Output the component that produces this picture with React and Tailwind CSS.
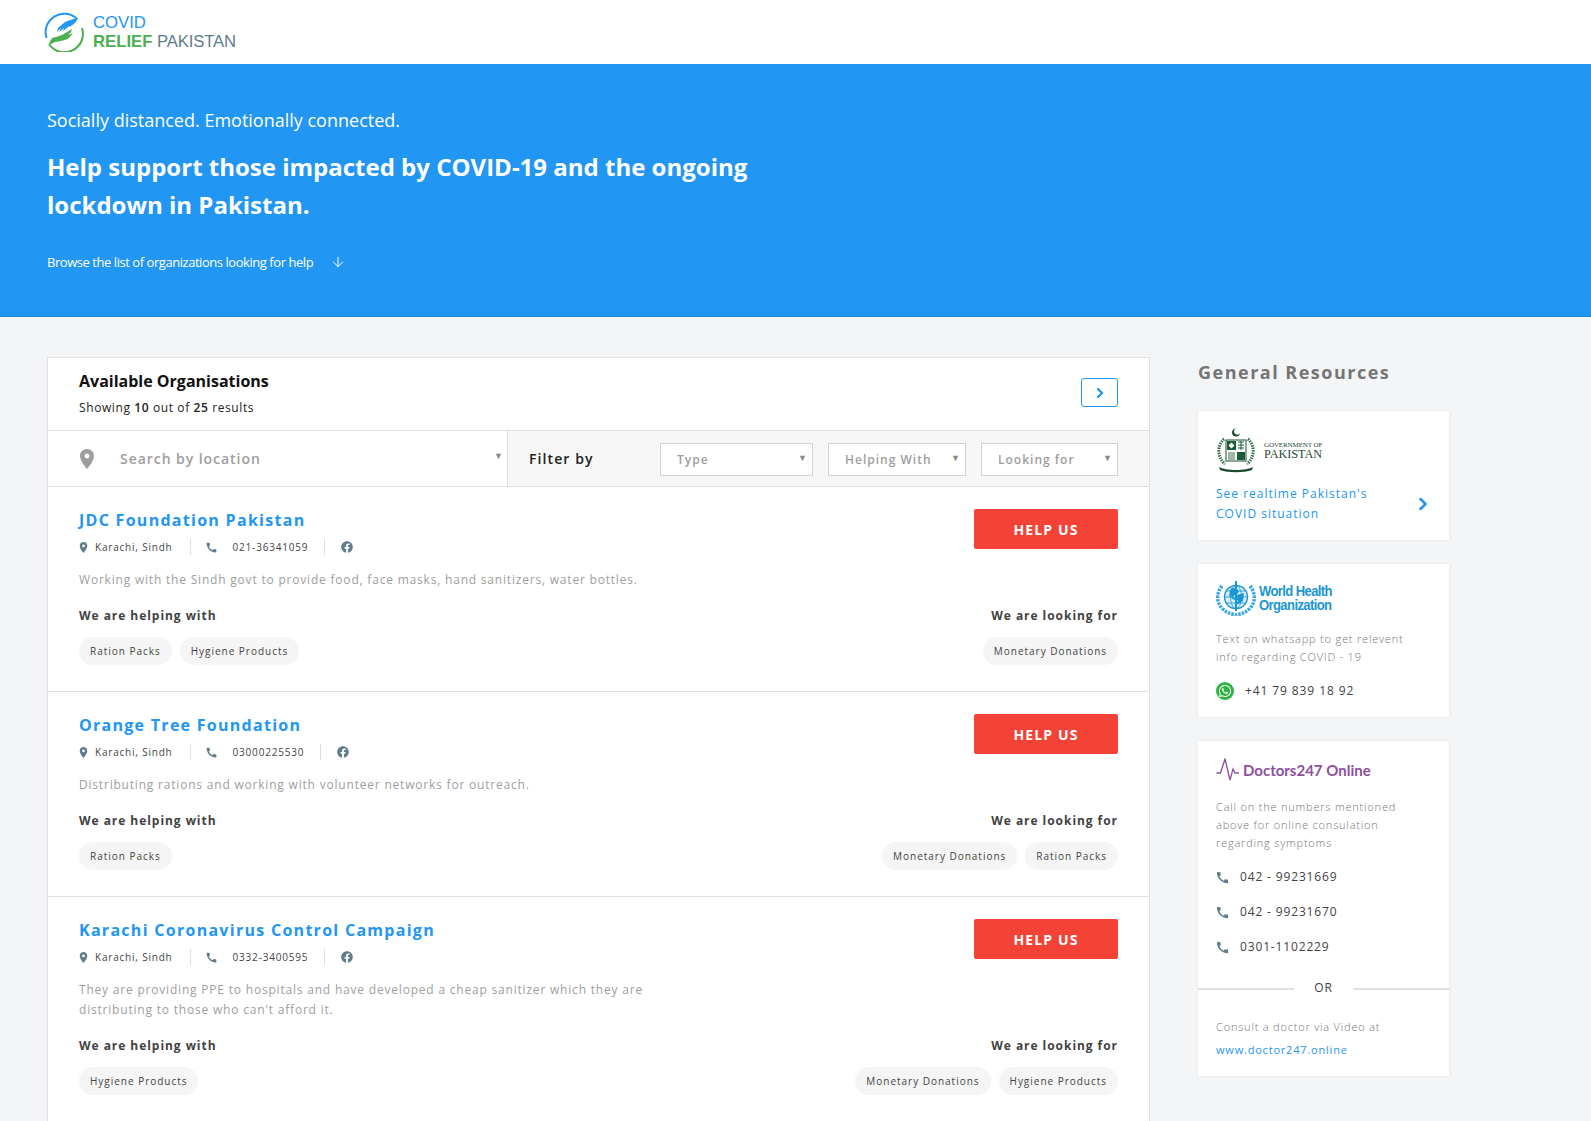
import React from "react";
import { ChevronRight, ArrowDown } from "lucide-react";
import { MdPlace, MdCall } from "react-icons/md";
import { FaFacebook, FaWhatsapp } from "react-icons/fa";

function CovidLogo() {
  return (
    <svg width="40" height="40" viewBox="0 0 40 40" className="shrink-0">
      <path d="M33 7 A18.500 18.500 0 0 0 2.500 26" fill="none" stroke="#2196f3" strokeWidth="2" />
      <path d="M38 16 A18.500 18.500 0 0 1 5 32" fill="none" stroke="#4caf50" strokeWidth="2" />
      <path d="M34 6 C29 7 25 8 21 10 L14 16 L13 20 L17 16 L15 20 L20 16 L19 19 L24 15 C28 14 32 11 34 6Z" fill="#2196f3" />
      <path d="M5 33 C6 28 8 25 12 25 L18 23 L23 20 L28 17 L27 20 L24 23 L29 21 L25 26 C21 29 15 29 11 30 C9 31 7 32 5 33Z" fill="#4caf50" />
    </svg>
  );
}

function GovEmblem() {
  return (
    <svg width="40" height="47" viewBox="0 0 40 47" className="shrink-0">
      <path d="M20 1.500 a4 4 0 1 0 4 4.500 a3.200 3.200 0 1 1 -4 -4.500Z" fill="#1b4d2e" />
      <path d="M8 12 C1 18 1 30 9 37" fill="none" stroke="#2f6b45" strokeWidth="3" strokeDasharray="1.500 1" />
      <path d="M32 12 C39 18 39 30 31 37" fill="none" stroke="#2f6b45" strokeWidth="3" strokeDasharray="1.500 1" />
      <rect x="10" y="13" width="20" height="21" fill="#fff" stroke="#1b4d2e" strokeWidth="1" />
      <rect x="11" y="14" width="9" height="9" fill="#1b5e35" />
      <path d="M15.500 15.500 l3 3 -3 3 -3 -3Z" fill="#fff" />
      <path d="M22 15 h6 M25 14 v9 M22 18 h6 M22 21 h6" stroke="#1b5e35" strokeWidth="1" />
      <path d="M12 25 h7 v8 h-7Z" fill="#9fb8a6" />
      <rect x="21" y="25" width="8" height="8" fill="#1b5e35" />
      <path d="M3 40 C10 44 30 44 37 40 L36 43 C28 46 12 46 4 43Z" fill="#1b4d2e" />
    </svg>
  );
}

function WhoEmblem() {
  return (
    <svg width="40" height="36" viewBox="0 0 40 36" className="shrink-0">
      <circle cx="20" cy="17" r="11.500" fill="#d7edf8" stroke="#1a96d4" strokeWidth="1.400" />
      <ellipse cx="20" cy="17" rx="5.500" ry="11.500" fill="none" stroke="#1a96d4" strokeWidth="0.800" />
      <path d="M8.500 17 h23 M10 11 h20 M10 23 h20" stroke="#1a96d4" strokeWidth="0.800" />
      <path d="M14 10 C18 8 21 11 19 14 L13 17 Z M21 15 L28 13 L27 21 L22 24 Z" fill="#1a96d4" />
      <path d="M20 1 v30" stroke="#1a96d4" strokeWidth="2" />
      <path d="M15 9 C22 8 24 12 19 14 C14 16 16 20 22 19 C26 18 24 23 19 24" fill="none" stroke="#1a96d4" strokeWidth="1.800" />
      <path d="M6 6 C0 13 0 24 8 30 C13 34 17 34 20 35" fill="none" stroke="#3ba7dd" strokeWidth="3.500" strokeDasharray="2.500 1" />
      <path d="M34 6 C40 13 40 24 32 30 C27 34 23 34 20 35" fill="none" stroke="#3ba7dd" strokeWidth="3.500" strokeDasharray="2.500 1" />
    </svg>
  );
}

function Pulse() {
  return (
    <svg width="24" height="24" viewBox="0 0 24 24" className="shrink-0">
      <path d="M0.500 15 H4.500 L9 1 L14 22 L17 11 L19 15 H23" fill="none" stroke="#8e4f9f" strokeWidth="1.300" />
    </svg>
  );
}

function Pill({ children }) {
  return (
    <span className="h-[28px] px-[11px] flex items-center rounded-full bg-[#f5f5f5] text-[10px] font-medium tracking-[0.980px] text-[#444]">
      {children}
    </span>
  );
}

function Select({ w, pl, label }) {
  return (
    <div className={`${w} h-[33px] mt-[1px] pt-[2px] bg-white border-[1.500px] border-[#d3d3d3] relative flex items-center ${pl} text-[12px] font-semibold tracking-[1px] text-[#9e9e9e]`}>
      {label}
      <span className="absolute right-[4px] top-[7px] text-[9px] text-[#8a8a8a]">▼</span>
    </div>
  );
}

function Row({ name, phone, desc, helping, looking, last }) {
  return (
    <div className={`px-[31px] ${last ? "pb-[20px]" : "border-b border-[#e0e0e0]"}`}>
      <div className="flex justify-between items-start pt-[22px]">
        <div>
          <div className="-mt-[1px] text-[16px] leading-[24px] font-bold tracking-[1.280px] text-[#2196f3]">{name}</div>
          <div className="flex items-center h-[16px] mt-[7px] text-[10px] tracking-[0.800px] text-[#444]">
            <MdPlace className="text-[#607d8b] w-[13px] h-[13px] -ml-[2px]" />
            <span className="ml-[5px]">Karachi, Sindh</span>
            <span className="w-px h-[16px] bg-[#e0e0e0] ml-[17px]" />
            <MdCall className="text-[#607d8b] w-[13px] h-[13px] ml-[14px]" />
            <span className="ml-[15px]">{phone}</span>
            <span className="w-px h-[16px] bg-[#e0e0e0] ml-[16px]" />
            <FaFacebook className="text-[#607d8b] w-[12px] h-[12px] ml-[16px]" />
          </div>
        </div>
        <div className="w-[144px] h-[40px] pt-[1px] rounded-[2px] bg-[#f44336] text-white flex items-center justify-center text-[14px] font-bold tracking-[1.150px]">
          HELP US
        </div>
      </div>
      <div className="mt-[15px] w-[600px] text-[12px] leading-[20px] tracking-[0.800px] text-[#9e9e9e]">{desc}</div>
      <div className="flex justify-between mt-[16px] pb-[26px]">
        <div>
          <div className="text-[12px] leading-[20px] font-bold tracking-[0.950px] text-[#424242]">We are helping with</div>
          <div className="flex gap-[8px] mt-[11px]">{helping.map((h) => <Pill key={h}>{h}</Pill>)}</div>
        </div>
        <div className="flex flex-col items-end">
          <div className="text-[12px] leading-[20px] font-bold tracking-[0.950px] text-[#424242]">We are looking for</div>
          <div className="flex gap-[8px] mt-[11px]">{looking.map((h) => <Pill key={h}>{h}</Pill>)}</div>
        </div>
      </div>
    </div>
  );
}

function PhoneLine({ n }) {
  return (
    <div className="flex items-center h-[20px] text-[12px] tracking-[0.850px] text-[#424242]">
      <MdCall className="text-[#607d8b] w-[15px] h-[15px] -ml-[1px]" />
      <span className="ml-[10px]">{n}</span>
    </div>
  );
}

export default function App() {
  return (
    <div className="h-screen overflow-hidden bg-[#f4f5f7] [font-family:'Open_Sans',sans-serif]">
      <header className="h-[64px] bg-white flex items-center pl-[44px]">
        <CovidLogo />
        <div className="ml-[9px] text-[16.700px] leading-[19px] [font-family:'Liberation_Sans',sans-serif]">
          <div className="text-[#2196f3]">COVID</div>
          <div>
            <span className="font-bold text-[#4caf50]">RELIEF</span>{" "}
            <span className="text-[#607d8b] tracking-[-0.150px]">PAKISTAN</span>
          </div>
        </div>
      </header>

      <section className="h-[253px] bg-[#2196f3] border-b border-[#1f86d8] pl-[47px] pt-[43px] text-white">
        <div className="text-[18px] leading-[26px]">Socially distanced. Emotionally connected.</div>
        <h1 className="mt-[15px] w-[760px] text-[24px] leading-[38px] font-bold">
          Help support those impacted by COVID-19 and the ongoing lockdown in Pakistan.
        </h1>
        <div className="mt-[28px] flex items-center text-[13px] leading-[20px] tracking-[-0.450px]">
          Browse the list of organizations looking for help
          <ArrowDown className="ml-[17px] w-[16px] h-[16px]" strokeWidth={1.500} />
        </div>
      </section>

      <main className="flex pl-[47px] pt-[40px]">
        <div className="w-[1103px] shrink-0 bg-white border border-[#e0e0e0] self-start">
          <div className="h-[72px] flex justify-between px-[31px] pt-[10px]">
            <div>
              <div className="text-[16px] leading-[26px] font-bold text-[#111]">Available Organisations</div>
              <div className="mt-[4px] text-[12px] leading-[20px] tracking-[0.600px] text-[#222]">
                Showing <span className="font-semibold">10</span> out of <span className="font-semibold">25</span> results
              </div>
            </div>
            <div className="mt-[10px] w-[37px] h-[29px] border border-[#2196f3] rounded-[3px] flex items-center justify-center">
              <ChevronRight className="w-[16px] h-[16px] text-[#2196f3]" strokeWidth={3.500} />
            </div>
          </div>
          <div className="h-[57px] flex border-y border-[#e0e0e0]">
            <div className="w-[460px] shrink-0 flex items-center pl-[31px] relative border-r border-[#e0e0e0]">
              <MdPlace className="w-[24px] h-[24px] text-[#9e9e9e] -ml-[4px]" />
              <span className="ml-[21px] text-[14px] font-semibold tracking-[0.950px] text-[#9e9e9e]">Search by location</span>
              <span className="absolute right-[4px] top-[18px] text-[9px] text-[#8a8a8a]">▼</span>
            </div>
            <div className="flex-1 bg-[#f7f7f7] flex items-center pl-[21px] pr-[31px]">
              <span className="text-[14px] font-semibold tracking-[1.100px] text-[#222]">Filter by</span>
              <div className="ml-auto flex gap-[15px]">
                <Select w="w-[153px]" pl="pl-[16px]" label="Type" />
                <Select w="w-[138px]" pl="pl-[16px]" label="Helping With" />
                <Select w="w-[137px]" pl="pl-[16px]" label="Looking for" />
              </div>
            </div>
          </div>
          <Row
            name="JDC Foundation Pakistan"
            phone="021-36341059"
            desc="Working with the Sindh govt to provide food, face masks, hand sanitizers, water bottles."
            helping={["Ration Packs", "Hygiene Products"]}
            looking={["Monetary Donations"]}
          />
          <Row
            name="Orange Tree Foundation"
            phone="03000225530"
            desc="Distributing rations and working with volunteer networks for outreach."
            helping={["Ration Packs"]}
            looking={["Monetary Donations", "Ration Packs"]}
          />
          <Row
            last
            name="Karachi Coronavirus Control Campaign"
            phone="0332-3400595"
            desc="They are providing PPE to hospitals and have developed a cheap sanitizer which they are distributing to those who can't afford it."
            helping={["Hygiene Products"]}
            looking={["Monetary Donations", "Hygiene Products"]}
          />
        </div>

        <aside className="ml-[48px] w-[251px] shrink-0">
          <div className="text-[18px] leading-[30px] font-bold tracking-[1.500px] text-[#757575]">General Resources</div>
          <div className="mt-[24px] h-[129px] bg-white shadow-[0_0_4px_rgba(0,0,0,0.06)] pl-[18px] pr-[21px] pt-[16px]">
            <div className="flex items-center">
              <GovEmblem />
              <div className="ml-[8px] [font-family:'Liberation_Serif',serif] text-[#2a4a35]">
                <div className="text-[7px] leading-[8px] tracking-[-0.100px]">GOVERNMENT OF</div>
                <div className="text-[12.200px] leading-[11px]">PAKISTAN</div>
              </div>
            </div>
            <div className="flex items-center justify-between mt-[10px]">
              <div className="text-[12px] leading-[20px] tracking-[1px] text-[#2196f3]">
                See realtime Pakistan's<br />COVID situation
              </div>
              <ChevronRight className="w-[20px] h-[20px] text-[#2196f3] -mr-[5px]" strokeWidth={3} />
            </div>
          </div>

          <div className="mt-[24px] h-[153px] bg-white shadow-[0_0_4px_rgba(0,0,0,0.06)] pl-[18px] pt-[16px]">
            <div className="flex items-center">
              <WhoEmblem />
              <div className="ml-[3px] text-[15px] leading-[14px] font-bold tracking-[-0.700px] text-[#1a96d4] scale-x-[0.87] origin-left [font-family:'Liberation_Sans',sans-serif]">
                World Health<br />Organization
              </div>
            </div>
            <div className="mt-[14px] text-[11px] leading-[18px] font-light tracking-[0.800px] text-[#757575]">
              Text on whatsapp to get relevent<br />info regarding COVID - 19
            </div>
            <div className="mt-[16px] flex items-center">
              <span className="w-[18px] h-[18px] rounded-full bg-[#2fb344] flex items-center justify-center">
                <FaWhatsapp className="w-[14px] h-[14px] text-white" />
              </span>
              <span className="ml-[11px] text-[12px] tracking-[0.900px] text-[#424242]">+41 79 839 18 92</span>
            </div>
          </div>

          <div className="mt-[24px] h-[335px] bg-white shadow-[0_0_4px_rgba(0,0,0,0.06)] pt-[17px]">
            <div className="pl-[18px] flex items-center">
              <Pulse />
              <span className="ml-[3px] text-[15px] leading-[24px] font-bold text-[#8e4f9f] [font-family:'Lato',sans-serif]">Doctors247 Online</span>
            </div>
            <div className="pl-[18px] mt-[16px] text-[11px] leading-[18px] font-light tracking-[0.800px] text-[#757575]">
              Call on the numbers mentioned<br />above for online consulation<br />regarding symptoms
            </div>
            <div className="pl-[18px] mt-[15px] flex flex-col gap-[15px]">
              <PhoneLine n="042 - 99231669" />
              <PhoneLine n="042 - 99231670" />
              <PhoneLine n="0301-1102229" />
            </div>
            <div className="flex items-center mt-[22px] text-[12px] tracking-[1px] text-[#424242]">
              <span className="h-[2px] w-[96px] bg-[#e0e0e0] mt-[2px]" />
              <span className="flex-1 text-center">OR</span>
              <span className="h-[2px] w-[96px] bg-[#e0e0e0] mt-[2px]" />
            </div>
            <div className="pl-[18px] mt-[20px] text-[11px] leading-[20px] font-light tracking-[0.800px] text-[#757575]">Consult a doctor via Video at</div>
            <div className="pl-[18px] mt-[3px] text-[11px] leading-[20px] tracking-[0.800px] text-[#2196f3]">www.doctor247.online</div>
          </div>
        </aside>
      </main>
    </div>
  );
}
